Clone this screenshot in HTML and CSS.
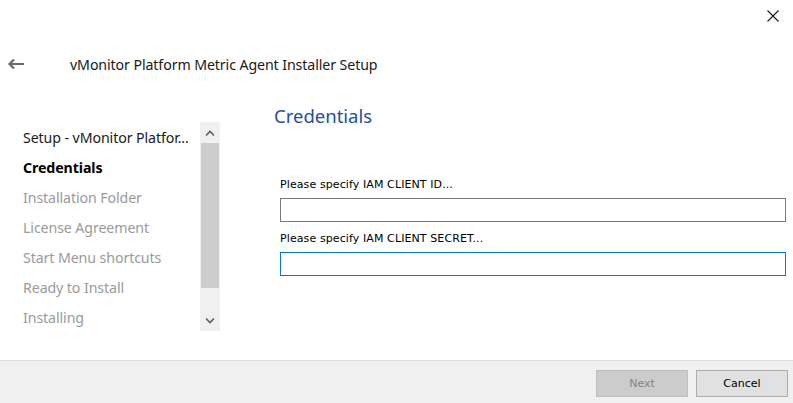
FILE: index.html
```html
<!DOCTYPE html>
<html>
<head>
<meta charset="utf-8">
<link rel="stylesheet" href="styles.css">
</head>
<body>
<div class="window">
  <div class="topbar">
    <button class="close" aria-label="Close">
      <svg width="12" height="12" viewBox="0 0 12 12"><path d="M0.5 0.5L11.5 11.5M11.5 0.5L0.5 11.5" stroke="#1a1a1a" stroke-width="1.1" fill="none"/></svg>
    </button>
  </div>
  <div class="titlerow">
    <span class="back">
      <svg width="18" height="12" viewBox="0 0 18 12"><path d="M17 6H2.5M7 1.5L2.5 6L7 10.5" stroke="#6b6b6b" stroke-width="2.2" fill="none"/></svg>
    </span>
    <span class="title">vMonitor Platform Metric Agent Installer Setup</span>
  </div>
  <div class="content">
    <div class="sidebar">
      <ul class="steps">
        <li class="step done">Setup - vMonitor Platfor...</li>
        <li class="step active">Credentials</li>
        <li class="step">Installation Folder</li>
        <li class="step">License Agreement</li>
        <li class="step">Start Menu shortcuts</li>
        <li class="step">Ready to Install</li>
        <li class="step">Installing</li>
      </ul>
      <div class="scrollbar">
        <div class="sb-arrow">
          <svg width="10" height="6" viewBox="0 0 10 6"><path d="M1 5.5L5 1.5L9 5.5" stroke="#606060" stroke-width="1.6" fill="none"/></svg>
        </div>
        <div class="sb-track"><div class="sb-thumb"></div></div>
        <div class="sb-arrow">
          <svg width="10" height="6" viewBox="0 0 10 6"><path d="M1 0.5L5 4.5L9 0.5" stroke="#606060" stroke-width="1.6" fill="none"/></svg>
        </div>
      </div>
    </div>
    <div class="main">
      <h1 class="heading">Credentials</h1>
      <div class="fields">
        <label class="label">Please specify IAM CLIENT ID...</label>
        <input class="input" type="text">
        <label class="label second">Please specify IAM CLIENT SECRET...</label>
        <input class="input focused" type="text">
      </div>
    </div>
  </div>
  <div class="footer">
    <button class="btn disabled">Next</button>
    <button class="btn">Cancel</button>
  </div>
</div>
</body>
</html>
```
FILE: styles.css
```css
* { box-sizing: border-box; }
html, body { margin: 0; padding: 0; background: #ffffff; }
body { font-family: "Noto Sans", "Open Sans", sans-serif; color: #1a1a1a; }

.window {
  width: 793px;
  height: 403px;
  display: flex;
  flex-direction: column;
  overflow: hidden;
}

.topbar {
  height: 40px;
  display: flex;
  justify-content: flex-end;
  align-items: flex-start;
}
.close {
  width: 46px;
  height: 31px;
  border: none;
  background: transparent;
  padding: 0;
  display: flex;
  align-items: center;
  justify-content: center;
}
.close svg { display: block; margin-left: 6px; }

.titlerow {
  height: 48px;
  display: flex;
  align-items: center;
}
.back {
  width: 70px;
  padding-left: 7px;
  display: flex;
  align-items: center;
}
.back svg { display: block; }
.title {
  font-size: 14.2px;
  color: #1a1a1a;
  letter-spacing: -0.1px;
}

.content {
  display: flex;
  align-items: flex-start;
}

.sidebar {
  margin-top: 34px;
  display: flex;
  width: 220px;
}
.steps {
  list-style: none;
  margin: 0;
  padding: 1px 0 0 23px;
  width: 200px;
}
.step {
  height: 30px;
  line-height: 30px;
  font-size: 14.2px;
  color: #9a9a9a;
  white-space: nowrap;
  letter-spacing: -0.1px;
}
.step.done { color: #1a1a1a; }
.step.active { color: #000; font-weight: 700; }

.scrollbar {
  width: 20px;
  height: 209px;
  background: #f0f0f0;
  display: flex;
  flex-direction: column;
}
.sb-arrow {
  height: 21px;
  display: flex;
  align-items: center;
  justify-content: center;
}
.sb-arrow svg { display: block; }
.sb-track { flex: 1; }
.sb-thumb {
  height: 145px;
  background: #cdcdcd;
  margin: 0 1px;
}

.main {
  flex: 1;
  padding-left: 54px;
}
.heading {
  margin: 14px 0 0 0;
  font-size: 18.5px;
  line-height: 28px;
  font-weight: 400;
  color: #1e4fa3;
}
.fields {
  margin-top: 46px;
  padding-left: 6px;
  display: flex;
  flex-direction: column;
  font-family: "DejaVu Sans", "Liberation Sans", sans-serif;
}
.label {
  font-size: 11px;
  line-height: 16px;
  padding-top: 1px;
  color: #000;
  letter-spacing: 0.1px;
}
.label.second { margin-top: 8px; }
.input {
  margin-top: 5px;
  width: 506px;
  height: 24px;
  border: 1px solid #7a7a7a;
  background: #fff;
  outline: none;
  padding: 0 3px;
}
.input.focused { border-color: #0078d7; }

.footer {
  margin-top: auto;
  height: 43px;
  background: #f0f0f0;
  border-top: 1px solid #dfdfdf;
  display: flex;
  justify-content: flex-end;
  align-items: flex-start;
  padding: 9px 5px 0 0;
  gap: 8px;
}
.btn {
  width: 92px;
  height: 27px;
  border: 1px solid #adadad;
  background: #e1e1e1;
  font-family: "DejaVu Sans", "Liberation Sans", sans-serif;
  font-size: 11px;
  color: #000;
  padding: 0;
}
.btn.disabled {
  background: #cccccc;
  border-color: #bfbfbf;
  color: #838383;
}
```
